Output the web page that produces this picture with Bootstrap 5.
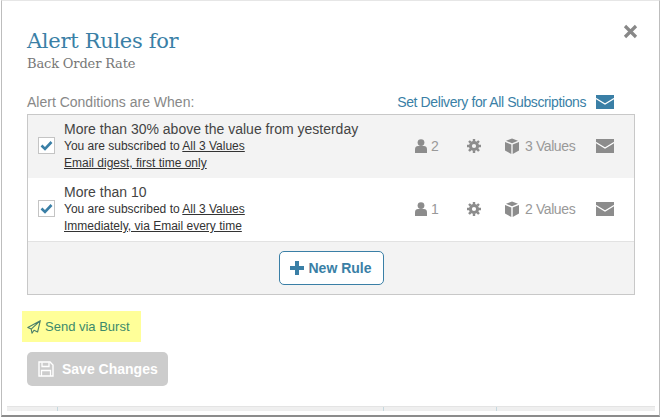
<!DOCTYPE html>
<html lang="en">
<head>
  <meta charset="UTF-8">
  <meta name="viewport" content="width=device-width, initial-scale=1.0">
  <title>Alert Rules</title>
  <link href="https://cdn.jsdelivr.net/npm/bootstrap@5.3.0/dist/css/bootstrap.min.css" rel="stylesheet">
  <style>
    body {
      font-family: "Liberation Sans", Arial, sans-serif;
      background: #fff;
      overflow: hidden;
    }
    .alert-window {
      width: 659px;
      height: 417px;
      margin-left: 1px;
      border-top: 1px solid #e6e6e6;
      border-left: 1px solid #bdbdbd;
      border-right: 1px solid #bdbdbd;
      border-bottom: 2px solid #8c8c8c;
      padding: 25px 24px 0 25px;
      position: relative;
    }
    .title-main {
      font-family: "DejaVu Serif", serif;
      font-size: 21px;
      letter-spacing: -0.3px;
      line-height: 30px;
      color: #3a7fa6;
      margin: 0;
    }
    .title-sub {
      font-family: "DejaVu Serif", serif;
      font-size: 13px;
      letter-spacing: -0.15px;
      line-height: 16px;
      color: #777;
      margin: 0;
    }
    .close-x {
      margin-right: -3px;
      margin-top: -2px;
      line-height: 0;
      background: none;
      border: 0;
      padding: 0;
    }
    .cond-head {
      margin-top: 20px;
      height: 20px;
      font-size: 14px;
      line-height: 20px;
      color: #888;
    }
    .delivery-link {
      letter-spacing: -0.4px;
      color: #3a7fa6;
      text-decoration: none;
      margin-right: 10px;
    }
    .head-env { margin-right: 21px; }
    .rules-box {
      border: 1px solid #c8c8c8;
      margin-top: 2px;
    }
    .rule-row {
      height: 63px;
      padding-left: 10px;
      padding-right: 20px;
      background: #fff;
    }
    .rule-row.shaded { background: #f3f3f3; }
    .rule-row > .meta-cell,
    .rule-row > svg { margin-bottom: 1px; }
    .check-box {
      width: 17px;
      height: 17px;
      border: 1px solid #c4c4c4;
      background: #fff;
      margin-right: 9px;
      margin-bottom: 2px;
      flex: none;
    }
    .rule-main {
      font-size: 14px;
      line-height: 17px;
      color: #444;
    }
    .rule-sub {
      font-size: 12px;
      line-height: 17px;
      color: #333;
    }
    .rule-sub u { color: #333; }
    .meta-cell {
      font-size: 14px;
      letter-spacing: -0.4px;
      color: #999;
      line-height: 20px;
    }
    .meta-people { width: 52px; gap: 4px; }
    .meta-gear { width: 38px; }
    .meta-values { width: 91px; gap: 6px; }
    .rule-foot {
      height: 53px;
      background: #f3f3f3;
      border-top: 1px solid #e2e2e2;
    }
    .btn-newrule {
      width: 105px;
      height: 34px;
      border: 1px solid #3a7fa6;
      border-radius: 5px;
      background: #fff;
      color: #3a7fa6;
      font-size: 14px;
      font-weight: 700;
      padding: 0;
      gap: 4px;
    }
    .burst-mark {
      margin-top: 16px;
      margin-left: -5px;
      width: 119px;
      height: 31px;
      padding-left: 5px;
      gap: 4px;
      background: #ffff99;
      color: #3c8a6c;
      font-size: 13px;
    }
    .btn.btn-save,
    .btn.btn-save:disabled {
      display: flex;
      margin-top: 10px;
      width: 141px;
      height: 34px;
      background: #cccccc;
      border: 0;
      border-radius: 5px;
      color: #fff;
      font-size: 14px;
      font-weight: 700;
      padding: 0 0 0 11px;
      gap: 8px;
      opacity: 1;
    }
    .page-behind {
      position: absolute;
      left: 5px;
      right: 4px;
      bottom: 4px;
      height: 5px;
      background: #efefef;
      border-top: 1px solid #e4e4e4;
    }
    .page-behind i {
      position: absolute;
      top: 0;
      width: 1px;
      height: 4px;
      background: #c5d8df;
    }
  </style>
</head>
<body>
  <div class="alert-window">
    <div class="d-flex align-items-start justify-content-between">
      <div>
        <h1 class="title-main">Alert Rules for</h1>
        <p class="title-sub">Back Order Rate</p>
      </div>
      <button type="button" class="close-x" aria-label="Close">
        <svg width="15" height="15" viewBox="0 0 15 15"><path d="M2 2l11 11M13 2L2 13" stroke="#888" stroke-width="3.2" fill="none"/></svg>
      </button>
    </div>

    <div class="cond-head d-flex align-items-center">
      <span>Alert Conditions are When:</span>
      <a href="#" class="delivery-link ms-auto">Set Delivery for All Subscriptions</a>
      <svg class="head-env" width="18" height="14" viewBox="0 0 18 14"><rect width="18" height="14" fill="#3a7fa6"/><path d="M0 3.5l9 5.5 9-5.5" stroke="#fff" stroke-width="1.2" fill="none"/></svg>
    </div>

    <div class="rules-box">
      <div class="rule-row shaded d-flex align-items-center">
        <span class="check-box d-flex align-items-center justify-content-center">
          <svg width="13" height="11" viewBox="0 0 13 11"><path d="M1.5 5.5l3.5 3.5 6.5-7" stroke="#3a7fa6" stroke-width="2.6" fill="none"/></svg>
        </span>
        <div>
          <div class="rule-main">More than 30% above the value from yesterday</div>
          <div class="rule-sub">You are subscribed to <u>All 3 Values</u></div>
          <div class="rule-sub"><u>Email digest, first time only</u></div>
        </div>
        <div class="meta-cell meta-people d-flex align-items-center ms-auto">
          <svg width="12" height="14" viewBox="0 0 12 14"><circle cx="6" cy="3.6" r="3.4" fill="#8c8c8c"/><path d="M0 14V10.2C0 8.2 1.5 7 3 7h6c1.5 0 3 1.2 3 3.2V14z" fill="#8c8c8c"/></svg>
          <span>2</span>
        </div>
        <div class="meta-cell meta-gear d-flex align-items-center">
          <svg width="14" height="14" viewBox="0 0 14 14"><circle cx="7" cy="7" r="3.6" fill="none" stroke="#8c8c8c" stroke-width="3"/><path d="M7 0v14M0 7h14M2 2l10 10M12 2L2 12" stroke="#8c8c8c" stroke-width="2.4" stroke-dasharray="2.4 9.2 2.4 0"/></svg>
        </div>
        <div class="meta-cell meta-values d-flex align-items-center">
          <svg width="14" height="16" viewBox="0 0 14 16"><path d="M7 0.5l6 2.3-6 2.4-6-2.4zM0 4l6.3 2.6V16L0 12.6zM14 4L7.7 6.6V16L14 12.6z" fill="#8c8c8c"/></svg>
          <span>3 Values</span>
        </div>
        <svg width="18" height="14" viewBox="0 0 18 14"><rect width="18" height="14" fill="#8c8c8c"/><path d="M0 3.5l9 5.5 9-5.5" stroke="#fff" stroke-width="1.2" fill="none"/></svg>
      </div>

      <div class="rule-row d-flex align-items-center">
        <span class="check-box d-flex align-items-center justify-content-center">
          <svg width="13" height="11" viewBox="0 0 13 11"><path d="M1.5 5.5l3.5 3.5 6.5-7" stroke="#3a7fa6" stroke-width="2.6" fill="none"/></svg>
        </span>
        <div>
          <div class="rule-main">More than 10</div>
          <div class="rule-sub">You are subscribed to <u>All 3 Values</u></div>
          <div class="rule-sub"><u>Immediately, via Email every time</u></div>
        </div>
        <div class="meta-cell meta-people d-flex align-items-center ms-auto">
          <svg width="12" height="14" viewBox="0 0 12 14"><circle cx="6" cy="3.6" r="3.4" fill="#8c8c8c"/><path d="M0 14V10.2C0 8.2 1.5 7 3 7h6c1.5 0 3 1.2 3 3.2V14z" fill="#8c8c8c"/></svg>
          <span>1</span>
        </div>
        <div class="meta-cell meta-gear d-flex align-items-center">
          <svg width="14" height="14" viewBox="0 0 14 14"><circle cx="7" cy="7" r="3.6" fill="none" stroke="#8c8c8c" stroke-width="3"/><path d="M7 0v14M0 7h14M2 2l10 10M12 2L2 12" stroke="#8c8c8c" stroke-width="2.4" stroke-dasharray="2.4 9.2 2.4 0"/></svg>
        </div>
        <div class="meta-cell meta-values d-flex align-items-center">
          <svg width="14" height="16" viewBox="0 0 14 16"><path d="M7 0.5l6 2.3-6 2.4-6-2.4zM0 4l6.3 2.6V16L0 12.6zM14 4L7.7 6.6V16L14 12.6z" fill="#8c8c8c"/></svg>
          <span>2 Values</span>
        </div>
        <svg width="18" height="14" viewBox="0 0 18 14"><rect width="18" height="14" fill="#8c8c8c"/><path d="M0 3.5l9 5.5 9-5.5" stroke="#fff" stroke-width="1.2" fill="none"/></svg>
      </div>

      <div class="rule-foot d-flex align-items-center justify-content-center">
        <button type="button" class="btn btn-newrule d-inline-flex align-items-center justify-content-center">
          <svg width="14" height="14" viewBox="0 0 14 14"><path d="M7 0v14M0 7h14" stroke="#3a7fa6" stroke-width="4"/></svg>
          New Rule
        </button>
      </div>
    </div>

    <div class="burst-mark d-flex align-items-center">
      <svg width="14" height="14" viewBox="0 0 14 14"><path d="M13.3.7L.8 7.6l3.4 1.5L13.3.7 10.6 12 7 10.3l-2 2.9-.8-4.1" fill="none" stroke="#4b7f6a" stroke-width="1.1" stroke-linejoin="round"/></svg>
      <span>Send via Burst</span>
    </div>

    <button type="button" class="btn btn-save align-items-center" disabled>
      <svg width="16" height="16" viewBox="0 0 16 16"><path d="M1 1h11l3 3v11H1z" fill="none" stroke="#fff" stroke-width="1.4"/><path d="M4 1.5v4h7v-4M3.5 15V9.5h9V15" fill="none" stroke="#fff" stroke-width="1.3"/></svg>
      Save Changes
    </button>

    <div class="page-behind"><i style="left: 50px"></i><i style="left: 376px"></i><i style="left: 489px"></i></div>
  </div>
  <script src="https://cdn.jsdelivr.net/npm/bootstrap@5.3.0/dist/js/bootstrap.bundle.min.js"></script>
</body>
</html>
